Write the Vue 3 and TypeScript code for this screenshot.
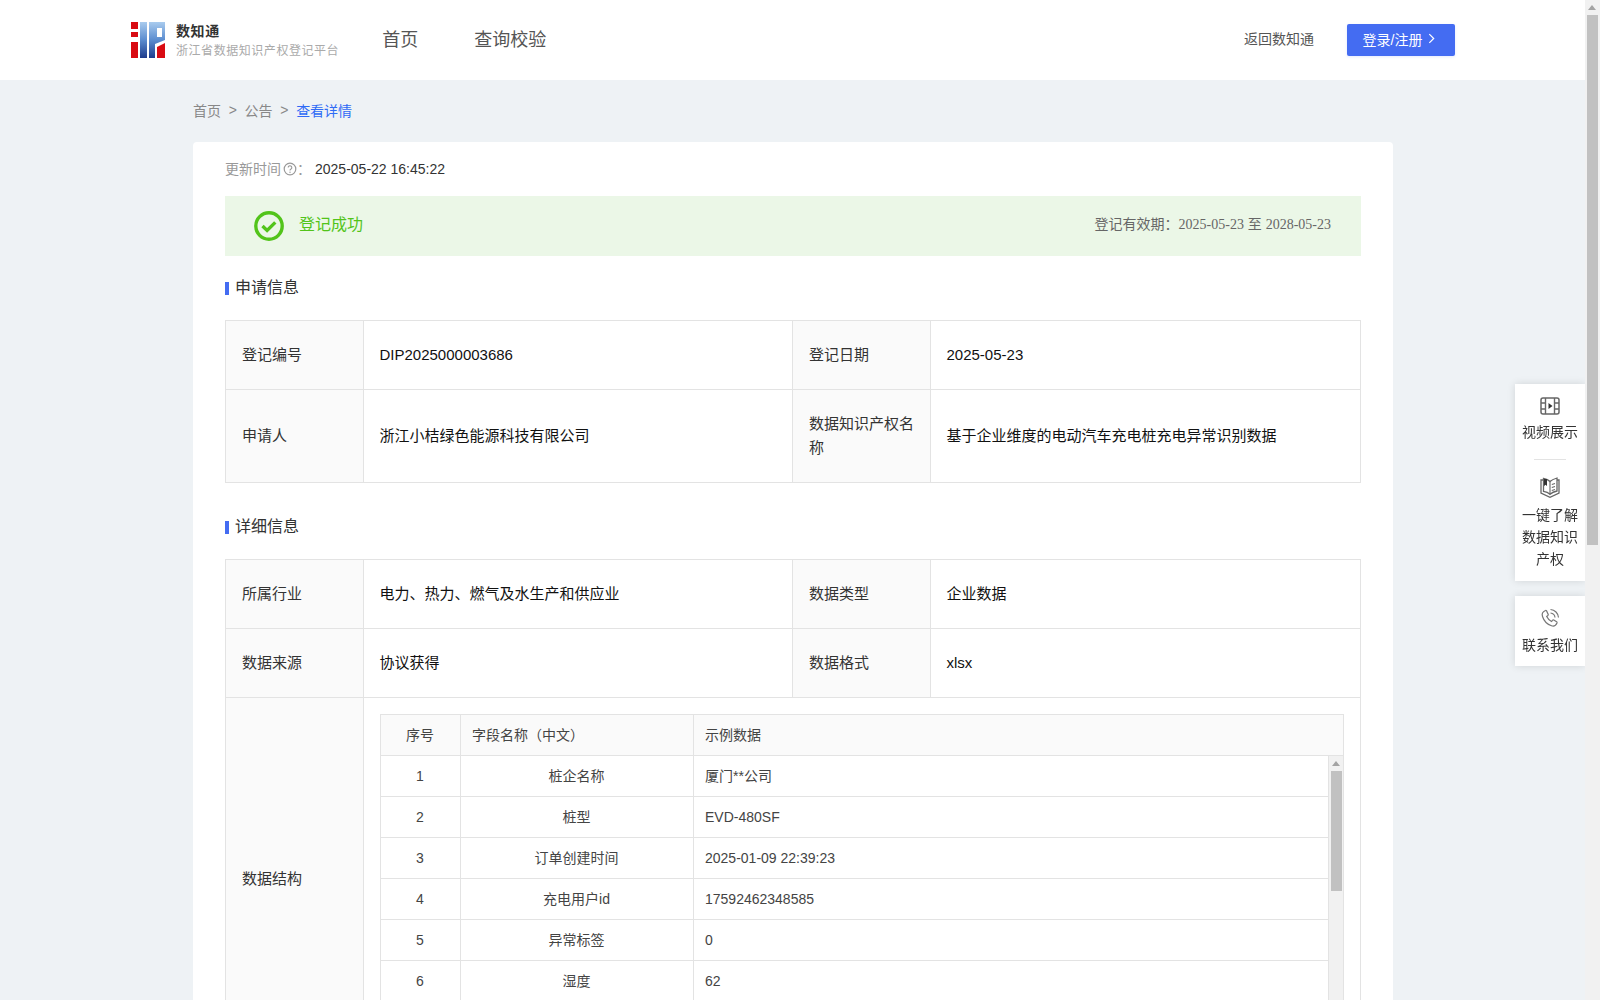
<template>
  <div class="page">
    <header class="topbar">
      <div class="brand">
        <svg class="logo" viewBox="0 0 34 36" width="34" height="36">
          <defs>
            <linearGradient id="blue" x1="0" y1="0" x2="0" y2="1">
              <stop offset="0" stop-color="#a9cbee" />
              <stop offset="0.5" stop-color="#5b8ccf" />
              <stop offset="1" stop-color="#1e3c8c" />
            </linearGradient>
          </defs>
          <path d="M0 0h7v7H0zM0 10h7v5H0zM0 20h7v16H0z" fill="#d90b12" />
          <path d="M9 0h7v36H9z" fill="url(#blue)" />
          <path d="M18 0h16v18l-10 4v14h-6zM26 6v9h5V6z" fill="url(#blue)" fill-rule="evenodd" />
          <path d="M26 25l8-4v15h-8z" fill="#d90b12" />
        </svg>
        <div class="brand-text">
          <strong>数知通</strong>
          <span>浙江省数据知识产权登记平台</span>
        </div>
      </div>
      <nav class="nav">
        <a>首页</a>
        <a>查询校验</a>
      </nav>
      <div class="top-right">
        <a class="back">返回数知通</a>
        <button class="login">
          登录/注册
          <svg viewBox="0 0 8 12" width="7" height="11"><path d="M1.5 1l5 5-5 5" fill="none" stroke="#fff" stroke-width="1.4" /></svg>
        </button>
      </div>
    </header>

    <main class="main">
      <div class="crumbs">
        <span>首页</span><i>&gt;</i><span>公告</span><i>&gt;</i><span class="current">查看详情</span>
      </div>

      <section class="card">
        <div class="update">
          <span class="update-label">更新时间</span>
          <svg class="help" viewBox="0 0 14 14" width="14" height="14">
            <circle cx="7" cy="7" r="5.8" fill="none" stroke="#999" stroke-width="1.2" />
            <path d="M5.2 5.6a1.8 1.8 0 1 1 2.8 1.5c-.7.4-1 .7-1 1.4" fill="none" stroke="#999" stroke-width="1.1" />
            <circle cx="7" cy="10.2" r=".7" fill="#999" />
          </svg>
          <span class="update-label colon">：</span>
          <span>2025-05-22 16:45:22</span>
        </div>

        <div class="status">
          <div class="status-left">
            <svg viewBox="0 0 30 30" width="30" height="30">
              <circle cx="15" cy="15" r="13.2" fill="none" stroke="#52c41a" stroke-width="3.4" />
              <path d="M8.5 15l4.6 4.4 8.2-8" fill="none" stroke="#52c41a" stroke-width="3.4" />
            </svg>
            <span>登记成功</span>
          </div>
          <div class="status-right">登记有效期：<em>2025-05-23</em> 至 <em>2028-05-23</em></div>
        </div>

        <h3 class="title">申请信息</h3>
        <table class="info">
          <colgroup><col class="c-label" /><col class="c-value" /><col class="c-label" /><col /></colgroup>
          <tbody>
            <tr>
              <th>登记编号</th>
              <td>DIP2025000003686</td>
              <th>登记日期</th>
              <td>2025-05-23</td>
            </tr>
            <tr>
              <th>申请人</th>
              <td>浙江小桔绿色能源科技有限公司</td>
              <th>数据知识产权名称</th>
              <td>基于企业维度的电动汽车充电桩充电异常识别数据</td>
            </tr>
          </tbody>
        </table>

        <h3 class="title second">详细信息</h3>
        <table class="info">
          <colgroup><col class="c-label" /><col class="c-value" /><col class="c-label" /><col /></colgroup>
          <tbody>
            <tr>
              <th>所属行业</th>
              <td>电力、热力、燃气及水生产和供应业</td>
              <th>数据类型</th>
              <td>企业数据</td>
            </tr>
            <tr>
              <th>数据来源</th>
              <td>协议获得</td>
              <th>数据格式</th>
              <td>xlsx</td>
            </tr>
            <tr>
              <th>数据结构</th>
              <td colspan="3" class="structure">
                <div class="fields">
                  <div class="fields-head">
                    <span class="f-no">序号</span>
                    <span class="f-name">字段名称（中文）</span>
                    <span class="f-sample">示例数据</span>
                  </div>
                  <div class="fields-body">
                    <div class="fields-rows">
                      <div v-for="(field, i) in fields" :key="field.name" class="fields-row">
                        <span class="f-no">{{ i + 1 }}</span>
                        <span class="f-name">{{ field.name }}</span>
                        <span class="f-sample">{{ field.sample }}</span>
                      </div>
                    </div>
                    <div class="inner-bar">
                      <i class="arrow"></i>
                      <i class="inner-thumb"></i>
                    </div>
                  </div>
                </div>
              </td>
            </tr>
          </tbody>
        </table>
      </section>
    </main>

    <aside class="side">
      <div class="side-box">
        <a class="side-item">
          <svg viewBox="0 0 20 18" width="20" height="18">
            <rect x="1" y="1" width="18" height="16" rx="2" fill="none" stroke="#666" stroke-width="1.5" />
            <path d="M5.500 1v16M14.500 1v16M1 6h4.500M1 12h4.500M14.500 6H19M14.500 12H19" fill="none" stroke="#666" stroke-width="1.400" />
            <path d="M8.500 6l4 3-4 3z" fill="#333" />
          </svg>
          <span>视频展示</span>
        </a>
        <div class="side-line"></div>
        <a class="side-item">
          <svg viewBox="0 0 20 21" width="20" height="21">
            <path d="M3.500 3H1v13l9 4.300 9-4.300V3h-2" fill="none" stroke="#666" stroke-width="1.300" />
            <path d="M3.500 1.500c2.800.4 5 1.300 6.500 3 1.800-1.700 4-2.600 7-3.500v13c-3 .6-5.200 1.700-7 3.300-1.500-1.600-3.700-2.700-6.500-3z" fill="none" stroke="#666" stroke-width="1.300" />
            <path d="M4 2h3v7L5.500 7.800 4 9z" fill="#333" />
            <path d="M10 4.500v12.800M11.800 7.500l3.200-1M11.800 10.500l3.200-1M11.800 13.500l3.200-1" fill="none" stroke="#666" stroke-width="1.100" />
          </svg>
          <span>一键了解<br />数据知识<br />产权</span>
        </a>
      </div>
      <div class="side-box contact">
        <a class="side-item">
          <svg viewBox="0 0 20 20" width="20" height="20">
            <path d="M5.500 2.500C3 3.500 1.500 5.500 2.500 8.500c1.300 4 5 8 9 9.300 2.500.8 4.500-.5 5.500-2.800.2-.5 0-.9-.4-1.200l-2.800-1.700c-.5-.3-1-.2-1.300.2l-1 1.200c-2-1-3.700-2.800-4.800-5l1.200-1c.4-.4.5-.9.200-1.300L6.600 2.900c-.3-.4-.7-.6-1.100-.4z" fill="none" stroke="#777" stroke-width="1.200" />
            <path d="M10.500 5a5 5 0 0 1 4.500 4.500M10.500 1.500a8.500 8.500 0 0 1 8 8" fill="none" stroke="#777" stroke-width="1.200" />
          </svg>
          <span>联系我们</span>
        </a>
      </div>
    </aside>

    <!-- window scrollbar, the browser hides the native one in the photo -->
    <div class="page-bar">
      <i class="arrow"></i>
      <i class="page-thumb"></i>
    </div>
  </div>
</template>

<script setup lang="ts">
interface Field {
  name: string
  sample: string
}

const fields: Field[] = [
  { name: '桩企名称', sample: '厦门**公司' },
  { name: '桩型', sample: 'EVD-480SF' },
  { name: '订单创建时间', sample: '2025-01-09 22:39:23' },
  { name: '充电用户id', sample: '17592462348585' },
  { name: '异常标签', sample: '0' },
  { name: '湿度', sample: '62' },
  { name: '温度', sample: '18' },
  { name: '充电电量', sample: '32.6' }
]
</script>

<style>
html,
body {
  margin: 0;
  background: #eef2f5;
}
</style>

<style scoped>
.page {
  font-family: "Liberation Sans", "Noto Sans CJK SC", sans-serif;
  font-size: 14px;
  color: #333;
  min-height: 1830px;
  background: #eef2f5;
}

.topbar {
  height: 80px;
  background: #fff;
  display: flex;
  align-items: center;
  padding: 0 145px 0 131px;
}

.brand {
  display: flex;
  align-items: center;
  gap: 11px;
}

.logo {
  display: block;
}

.brand-text {
  display: flex;
  flex-direction: column;
  gap: 2px;
  padding-top: 2px;
  line-height: 18px;
}

.brand-text strong {
  font-size: 14px;
  font-weight: 700;
  color: #333;
  letter-spacing: 0.6px;
}

.brand-text span {
  font-size: 12px;
  color: #aaa;
  letter-spacing: 0.55px;
}

.nav {
  display: flex;
  gap: 56px;
  margin-left: 43px;
  margin-top: -4px;
  font-size: 18px;
  color: #555;
}

.top-right {
  margin-left: auto;
  display: flex;
  align-items: center;
  gap: 33px;
}

.back {
  color: #555;
  margin-top: -4px;
}

.login {
  width: 108px;
  height: 32px;
  border: 0;
  border-radius: 2px;
  background: #446cf2;
  color: #fff;
  font: inherit;
  display: flex;
  align-items: center;
  justify-content: center;
  gap: 6px;
  padding: 0 4px 3px 0;
  box-shadow: 0 1px 3px rgba(68, 108, 242, 0.15);
}

.main {
  width: 1200px;
  margin-left: 193px;
}

.crumbs {
  height: 60px;
  margin-bottom: 2px;
  display: flex;
  align-items: center;
  color: #888;
}

.crumbs i {
  font-style: normal;
  margin: 0 7.7px;
}

.current {
  color: #2f6bf5;
}

.card {
  background: #fff;
  border-radius: 4px;
  padding: 17px 32px 32px;
}

.update {
  display: flex;
  align-items: center;
  height: 20px;
}

.update-label {
  color: #999;
  margin-top: -3px;
}

.help {
  margin-left: 2px;
}

.colon {
  width: 18px;
}

.status {
  height: 60px;
  margin-top: 17px;
  background: #ebf7e7;
  display: flex;
  align-items: center;
  justify-content: space-between;
  padding: 0 30px 0 29px;
}

.status-left {
  display: flex;
  align-items: center;
  gap: 15px;
  font-size: 16px;
  color: #52c41a;
}

.status-left span {
  margin-top: -7px;
}

.status-left svg {
  display: block;
}

.status-right {
  color: #666;
  margin-top: -7px;
}

.status-right em {
  font-family: "Liberation Serif", serif;
  font-style: normal;
}

.title {
  margin: 20px 0 0;
  height: 24px;
  line-height: 24px;
  font-size: 16px;
  font-weight: 400;
  color: #333;
  display: flex;
  align-items: center;
  gap: 6px;
}

.title::before {
  content: "";
  width: 4px;
  height: 13px;
  background: #446cf2;
}

.title.second {
  margin-top: 32px;
}

.info {
  width: 100%;
  margin-top: 20px;
  border-collapse: collapse;
  table-layout: fixed;
  font-size: 15px;
  line-height: 24px;
}

.c-label {
  width: 138px;
}

.c-value {
  width: 429px;
}

.info th,
.info td {
  border: 1px solid #e3e3e3;
  padding: 22px 15.5px;
  text-align: left;
  font-weight: 400;
  color: #111;
}

.info th {
  background: #fafafa;
  color: #333;
  padding: 22px 16px;
}

.info td.structure {
  padding: 16px 16px 15px;
}

.fields {
  border: 1px solid #e3e3e3;
  font-size: 14px;
  color: #444;
  line-height: 40px;
}

.fields-head,
.fields-row {
  display: grid;
  grid-template-columns: 80px 233px 1fr;
}

.fields-head {
  background: #fafafa;
  height: 40px;
  border-bottom: 1px solid #e3e3e3;
}

.fields-row {
  height: 40px;
  border-bottom: 1px solid #e3e3e3;
}

.fields-body {
  height: 288px;
  display: flex;
  overflow: hidden;
}

.fields-rows {
  flex: 1;
}

.inner-bar {
  width: 15px;
  flex: none;
  box-sizing: border-box;
  border-left: 1px solid #e3e3e3;
  background: #f1f1f1;
  position: relative;
}

.inner-thumb {
  display: block;
  height: 120px;
  margin: 15px 0 0 2px;
  width: 11px;
  background: #c1c1c1;
}

.arrow {
  position: absolute;
  top: 5px;
  left: 3px;
  width: 0;
  height: 0;
  border-left: 4px solid transparent;
  border-right: 4px solid transparent;
  border-bottom: 5px solid #a3a3a3;
}

.page-bar {
  position: fixed;
  top: 0;
  right: 0;
  bottom: 0;
  width: 15px;
  background: #f1f1f1;
}

.page-thumb {
  display: block;
  height: 530px;
  margin: 15px 2px 0;
  background: #c1c1c1;
}

.f-no,
.f-name {
  text-align: center;
  border-right: 1px solid #e3e3e3;
  padding-right: 1px;
}

.fields-head .f-name {
  text-align: left;
  padding: 0 0 0 11px;
}

.f-sample {
  padding-left: 11px;
}

.side {
  position: fixed;
  right: 15px;
  top: 384px;
  width: 70px;
  color: #333;
}

.side-box {
  background: #fff;
  box-shadow: 0 0 8px rgba(0, 0, 0, 0.12);
  height: 197px;
  padding-top: 13px;
  box-sizing: border-box;
}

.side-box.contact {
  height: 70px;
  margin-top: 15px;
  padding-top: 12px;
}

.side-item {
  display: flex;
  flex-direction: column;
  align-items: center;
  text-align: center;
  gap: 6px;
  line-height: 22px;
}

.side-line {
  width: 32px;
  height: 1px;
  background: #e3e3e3;
  margin: 16px auto 17px;
}
</style>
